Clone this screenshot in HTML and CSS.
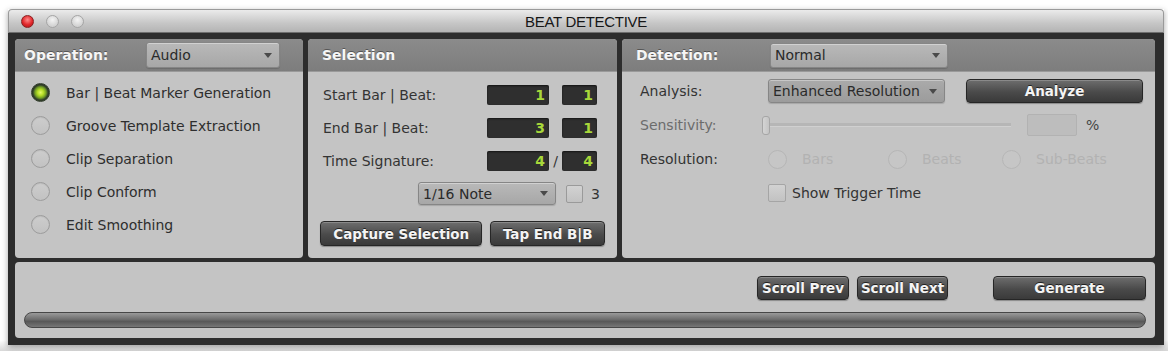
FILE: index.html
```html
<!DOCTYPE html>
<html lang="en">

<head>
    <meta charset="UTF-8" />
    <title>Beat Detective</title>
    <link rel="stylesheet" href="styles.css">
</head>

<body>
    <div class="window">
        <div class="titlebar">
            <div class="lights">
                <span class="light close"></span>
                <span class="light"></span>
                <span class="light"></span>
            </div>
            <div class="title">BEAT DETECTIVE</div>
            <div></div>
        </div>

        <div class="frame">
            <div class="top-row">
                <!-- Operation -->
                <div class="panel op-panel">
                    <div class="panel-head">
                        <span class="head-label op-label">Operation:</span>
                        <div class="dropdown op-select">Audio<span class="arrow"></span></div>
                    </div>
                    <div class="op-body">
                        <div class="radio-row"><span class="radio on"></span>Bar | Beat Marker Generation</div>
                        <div class="radio-row"><span class="radio"></span>Groove Template Extraction</div>
                        <div class="radio-row"><span class="radio"></span>Clip Separation</div>
                        <div class="radio-row"><span class="radio"></span>Clip Conform</div>
                        <div class="radio-row"><span class="radio"></span>Edit Smoothing</div>
                    </div>
                </div>

                <!-- Selection -->
                <div class="panel sel-panel">
                    <div class="panel-head">
                        <span class="head-label">Selection</span>
                    </div>
                    <div class="sel-body">
                        <div class="sel-row">
                            <span class="label">Start Bar | Beat:</span>
                            <span class="value wide">1</span>
                            <span class="sep"></span>
                            <span class="value">1</span>
                        </div>
                        <div class="sel-row">
                            <span class="label">End Bar | Beat:</span>
                            <span class="value wide">3</span>
                            <span class="sep"></span>
                            <span class="value">1</span>
                        </div>
                        <div class="sel-row">
                            <span class="label">Time Signature:</span>
                            <span class="value wide">4</span>
                            <span class="sep">/</span>
                            <span class="value">4</span>
                        </div>
                        <div class="note-row">
                            <div class="dropdown note-select">1/16 Note<span class="arrow"></span></div>
                            <span class="checkbox"></span>
                            <span class="triplet">3</span>
                        </div>
                        <div class="sel-buttons">
                            <button class="btn capture">Capture Selection</button>
                            <button class="btn tap">Tap End B|B</button>
                        </div>
                    </div>
                </div>

                <!-- Detection -->
                <div class="panel det-panel">
                    <div class="panel-head">
                        <span class="head-label det-label">Detection:</span>
                        <div class="dropdown det-select">Normal<span class="arrow"></span></div>
                    </div>
                    <div class="det-body">
                        <div class="det-row">
                            <span class="det-name">Analysis:</span>
                            <div class="dropdown analysis-select">Enhanced Resolution<span class="arrow"></span></div>
                            <button class="btn analyze">Analyze</button>
                        </div>
                        <div class="det-row">
                            <span class="det-name dim">Sensitivity:</span>
                            <div class="slider">
                                <span class="thumb"></span>
                                <span class="track"></span>
                            </div>
                            <span class="percent-box"></span>
                            <span class="percent">%</span>
                        </div>
                        <div class="det-row">
                            <span class="det-name">Resolution:</span>
                            <div class="res-option bars"><span class="radio off-dim"></span>Bars</div>
                            <div class="res-option beats"><span class="radio off-dim"></span>Beats</div>
                            <div class="res-option"><span class="radio off-dim"></span>Sub-Beats</div>
                        </div>
                        <div class="det-row">
                            <span class="det-name"></span>
                            <span class="checkbox trigger-box"></span>
                            <span class="trigger-label">Show Trigger Time</span>
                        </div>
                    </div>
                </div>
            </div>

            <!-- Bottom -->
            <div class="panel bottom-panel">
                <div class="bottom-buttons">
                    <button class="btn scroll-prev">Scroll Prev</button>
                    <button class="btn scroll-next">Scroll Next</button>
                    <button class="btn generate">Generate</button>
                </div>
                <div class="progress"></div>
            </div>
        </div>
    </div>
</body>

</html>
```

FILE: styles.css
```css
body {
    margin: 0;
    background: linear-gradient(#ffffff 0, #ffffff 340px, #d8d8d8 351px);
    min-height: 351px;
    font-family: "DejaVu Sans", "Liberation Sans", sans-serif;
    font-size: 14px;
    color: #333;
}

.window {
    margin: 9px 0 0 8px;
    width: 1156px;
    box-shadow: 0 2px 6px rgba(0, 0, 0, 0.35);
}

/* Title bar */
.titlebar {
    height: 24px;
    box-sizing: border-box;
    display: grid;
    grid-template-columns: 1fr auto 1fr;
    align-items: center;
    background: linear-gradient(#ebebeb, #c6c6c6 60%, #b4b4b4);
    border: 1px solid #9a9a9a;
    border-bottom: 1px solid #6e6e6e;
    border-radius: 4px 4px 0 0;
}

.lights {
    display: flex;
    gap: 12px;
    padding-left: 12px;
}

.light {
    width: 13px;
    height: 13px;
    border-radius: 50%;
    box-sizing: border-box;
    border: 1px solid #a5a5a5;
    background: radial-gradient(circle at 50% 35%, #f4f4f4, #d2d2d2 70%);
}

.light.close {
    border-color: #8a2020;
    background: radial-gradient(circle at 50% 35%, #ff8a8a, #e0262a 55%, #a4161a);
}

.title {
    font-family: "Liberation Sans", sans-serif;
    font-size: 15px;
    color: #161616;
    letter-spacing: -0.3px;
}

/* Frame */
.frame {
    background: #2d2d2d;
    padding: 6px 9px 7px 7px;
}

.top-row {
    display: flex;
    gap: 5px;
    height: 219px;
}

.panel {
    background: #c4c4c4;
    border-radius: 4px;
    overflow: hidden;
}

.op-panel {
    width: 288px;
}

.sel-panel {
    width: 309px;
}

.det-panel {
    width: 533px;
}

.panel-head {
    height: 33px;
    display: flex;
    align-items: center;
    padding-left: 14px;
    background: linear-gradient(#8b8b8b, #7d7d7d);
    border-bottom: 1px solid #9a9a9a;
    box-sizing: border-box;
}

.head-label {
    color: #f6f6f6;
    font-weight: bold;
    font-size: 14px;
    text-shadow: 0 -1px 0 #555;
}

.op-panel .panel-head {
    padding-left: 9px;
}

.op-label {
    width: 122px;
}

.det-label {
    width: 134px;
}

/* Dropdowns */
.dropdown {
    display: flex;
    align-items: center;
    box-sizing: border-box;
    padding: 0 7px 0 4px;
    background: linear-gradient(#b9b9b9, #a7a7a7);
    border: 1px solid #868686;
    border-radius: 3px;
    box-shadow: inset 0 1px 0 rgba(255, 255, 255, 0.35), 0 1px 1px rgba(0, 0, 0, 0.15);
    color: #2a2a2a;
    font-size: 14px;
}

.arrow {
    margin-left: auto;
    width: 0;
    height: 0;
    border-left: 4px solid transparent;
    border-right: 4px solid transparent;
    border-top: 5px solid #4a4a4a;
}

.op-select {
    width: 134px;
    height: 26px;
}

.det-select {
    width: 178px;
    height: 25px;
}

.note-select {
    width: 138px;
    height: 23px;
}

.analysis-select {
    width: 177px;
    height: 24px;
    background: linear-gradient(#aaaaaa, #9c9c9c);
}

/* Operation list */
.op-body {
    padding-top: 4px;
}

.radio-row {
    height: 33px;
    display: flex;
    align-items: center;
    gap: 16px;
    padding-left: 16px;
    color: #2e2e2e;
}

.radio {
    width: 19px;
    height: 19px;
    border-radius: 50%;
    box-sizing: border-box;
    border: 1.5px solid #9c9c9c;
    background: linear-gradient(#cdcdcd, #c2c2c2);
    box-shadow: inset 0 1px 1px rgba(0, 0, 0, 0.08);
    flex-shrink: 0;
}

.radio.on {
    border: 1px solid #34402e;
    background: radial-gradient(circle, #e4f868 0, #b6de26 3px, #74a024 5.5px, #34422c 7.5px, #2a3324 9px);
}

/* Selection */
.sel-body {
    padding: 6px 20px 0 15px;
}

.sel-row {
    height: 33px;
    display: grid;
    grid-template-columns: 1fr 62px 13px 35px;
    align-items: center;
}

.label {
    color: #333;
}

.value {
    height: 20px;
    line-height: 20px;
    box-sizing: border-box;
    background: #2f2f2f;
    border-radius: 2px;
    color: #a8d83a;
    font-weight: bold;
    font-size: 14px;
    text-align: right;
    padding-right: 4px;
    box-shadow: inset 0 1px 2px rgba(0, 0, 0, 0.6);
}

.sep {
    text-align: center;
    color: #333;
}

.note-row {
    height: 33px;
    display: flex;
    align-items: center;
    justify-content: flex-end;
    margin-right: -3px;
}

.checkbox {
    width: 17px;
    height: 18px;
    box-sizing: border-box;
    border: 1px solid #9a9a9a;
    border-radius: 2px;
    background: linear-gradient(#d2d2d2, #c2c2c2);
    margin-left: 10px;
}

.triplet {
    margin-left: 8px;
    color: #333;
}

.sel-buttons {
    display: flex;
    gap: 8px;
    margin: 11px -8px 0 -3px;
}

/* Buttons */
.btn {
    height: 25px;
    box-sizing: border-box;
    padding: 0;
    background: linear-gradient(#6e6e6e, #4a4a4a 55%, #3a3a3a);
    border: 1px solid #262626;
    border-radius: 4px;
    color: #f4f4f4;
    font-family: "DejaVu Sans", sans-serif;
    font-weight: bold;
    font-size: 13.5px;
    text-shadow: 0 -1px 0 #222;
    box-shadow: inset 0 1px 0 rgba(255, 255, 255, 0.2), 0 1px 1px rgba(0, 0, 0, 0.3);
}

.capture {
    width: 163px;
}

.tap {
    width: 115px;
}

/* Detection */
.det-body {
    padding: 2px 12px 0 18px;
}

.det-row {
    height: 34px;
    display: flex;
    align-items: center;
}

.det-name {
    width: 128px;
    flex-shrink: 0;
    color: #333;
}

.det-name.dim {
    color: #6c6c6c;
}

.analyze {
    width: 177px;
    height: 24px;
    margin-left: 21px;
}

.slider {
    display: flex;
    align-items: center;
    margin-left: -6px;
}

.thumb {
    width: 8px;
    height: 19px;
    box-sizing: border-box;
    border: 1px solid #a6a6a6;
    border-radius: 3px;
    background: linear-gradient(90deg, #d4d4d4, #c4c4c4);
}

.track {
    width: 241px;
    height: 3px;
    background: #b6b6b6;
    border-bottom: 1px solid #d0d0d0;
}

.percent-box {
    width: 50px;
    height: 22px;
    box-sizing: border-box;
    margin-left: 16px;
    background: #bdbdbd;
    border: 1px solid #b2b2b2;
    border-radius: 2px;
}

.percent {
    margin-left: 9px;
    color: #444;
}

.res-option {
    display: flex;
    align-items: center;
    gap: 15px;
    color: #b2b2b2;
}

.res-option.bars {
    width: 120px;
}

.res-option.beats {
    width: 114px;
}

.radio.off-dim {
    width: 19px;
    height: 19px;
    border: 1.5px solid #b6b6b6;
    background: #c6c6c6;
    box-shadow: none;
}

.trigger-box {
    width: 18px;
    height: 18px;
    margin-left: 0;
    border-color: #a5a5a5;
}

.trigger-label {
    margin-left: 6px;
    color: #333;
}

/* Bottom */
.bottom-panel {
    margin-top: 4px;
    height: 76px;
    padding: 14px 9px 0 9px;
    box-sizing: border-box;
}

.bottom-buttons {
    display: flex;
    justify-content: flex-end;
    height: 24px;
}

.bottom-buttons .btn {
    height: 24px;
}

.scroll-prev {
    width: 92px;
}

.scroll-next {
    width: 91px;
    margin-left: 8px;
}

.generate {
    width: 153px;
    margin-left: 45px;
}

.progress {
    margin-top: 12px;
    height: 16px;
    box-sizing: border-box;
    border: 1px solid #474747;
    border-radius: 8px;
    background: linear-gradient(#9a9a9a, #6e6e6e 45%, #585858 60%, #767676);
}
```
